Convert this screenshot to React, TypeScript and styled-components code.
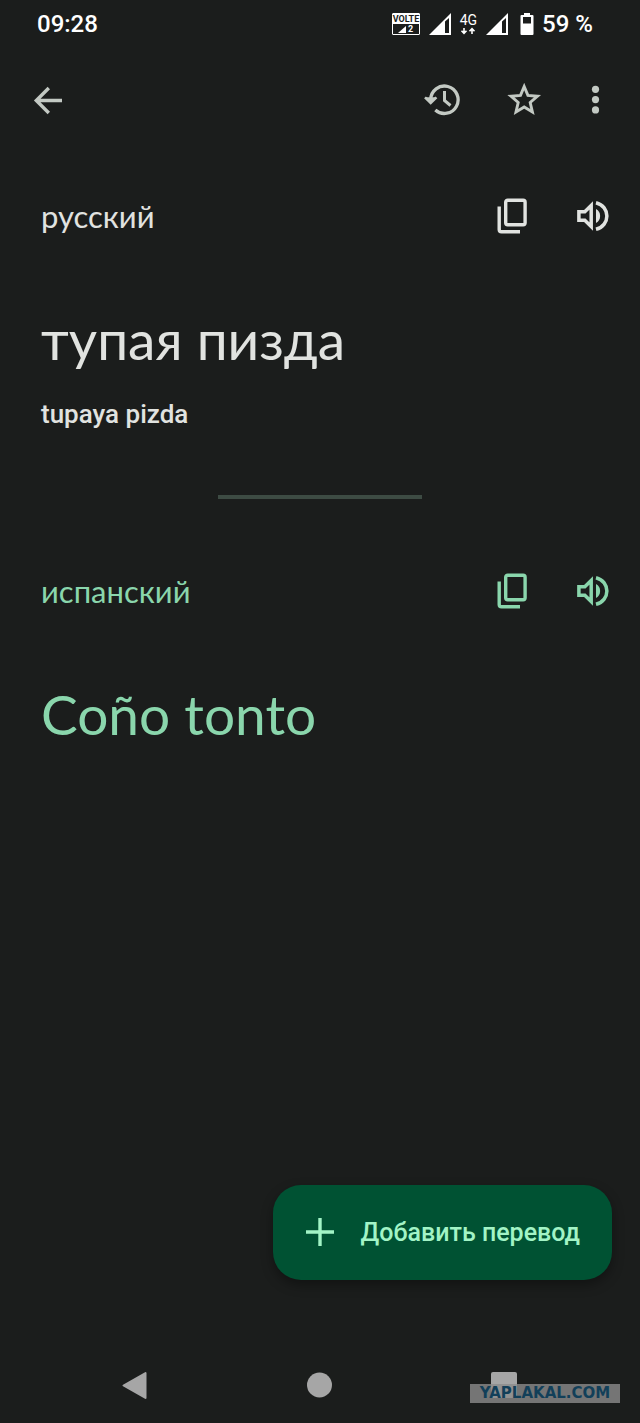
import React from "react";
import styled, { createGlobalStyle } from "styled-components";

const colors = {
  background: "#1b1d1c",
  text: "#e1e3e0",
  icon: "#c3c9c3",
  accent: "#8ad6ac",
  divider: "#3d4b43",
  fab: "#005233",
  fabText: "#a2f4c6",
  nav: "#a6a6a6",
};

const GlobalStyle = createGlobalStyle`
  *, *::before, *::after { box-sizing: border-box; }
  body { margin: 0; background: ${colors.background}; }
`;

const Screen = styled.div`
  display: flex;
  flex-direction: column;
  min-height: 100vh;
  background: ${colors.background};
  color: ${colors.text};
  font-family: Lato, "Noto Sans", sans-serif;
`;

const StatusBar = styled.div`
  display: flex;
  align-items: center;
  justify-content: space-between;
  height: 48px;
  padding: 0 47px 0 37px;
  color: #fff;
  font: 500 24px/28px Roboto, sans-serif;
`;

const StatusGroup = styled.div`
  display: flex;
  align-items: center;
  gap: 9px;
`;

const VolteBadge = styled.div`
  display: flex;
  flex-direction: column;
  width: 28px;
  height: 22px;
  border: 1px solid #fff;
  border-radius: 1px;
  font: 700 9px/10px Roboto, sans-serif;
  text-align: center;
`;

const VolteName = styled.span`
  background: #fff;
  color: ${colors.background};
`;

const VolteSlot = styled.span`
  display: flex;
  align-items: center;
  justify-content: center;
  gap: 2px;
`;

const Network = styled.div`
  display: flex;
  flex-direction: column;
  align-items: center;
  font: 400 14px/14px Roboto, sans-serif;
`;

const Battery = styled.div`
  display: flex;
  align-items: center;
  gap: 8px;
  padding-left: 3px;
`;

const Toolbar = styled.header`
  display: flex;
  align-items: center;
  justify-content: space-between;
  height: 104px;
  padding: 0 35px 0 27px;
  color: ${colors.icon};
`;

const Actions = styled.div`
  display: flex;
  gap: 40px;
`;

const IconButton = styled.button<{ $width?: number }>`
  display: flex;
  align-items: center;
  justify-content: center;
  width: ${({ $width = 42 }) => $width}px;
  height: 42px;
  padding: 0;
  border: 0;
  background: none;
  color: inherit;
  cursor: pointer;
`;

const Panel = styled.section<{ $accent?: boolean }>`
  padding: 43px 26px 0 41px;
  color: ${({ $accent }) => ($accent ? colors.accent : colors.text)};
`;

const LanguageRow = styled.div`
  display: flex;
  align-items: center;
  justify-content: space-between;
`;

const Language = styled.h2`
  margin: 0;
  font-size: 31px;
  font-weight: 400;
  line-height: 42px;
`;

const Phrase = styled.p`
  margin: 68px 0 0;
  font-size: 55px;
  font-weight: 400;
  line-height: 68px;
`;

const Transliteration = styled.p`
  margin: 25px 0 0;
  font: 500 26px/32px Roboto, sans-serif;
`;

const Divider = styled.hr`
  width: 32%;
  height: 4px;
  margin: 65px auto 28px;
  border: 0;
  background: ${colors.divider};
`;

const AddButton = styled.button`
  display: flex;
  align-items: center;
  align-self: flex-end;
  gap: 24px;
  height: 95px;
  margin: auto 28px 0 0;
  padding: 0 32px 0 28px;
  border: 0;
  border-radius: 28px;
  background: ${colors.fab};
  box-shadow: 0 5px 12px rgba(0, 0, 0, 0.35);
  color: ${colors.fabText};
  font: 500 25px/32px Roboto, sans-serif;
  cursor: pointer;
`;

const NavBar = styled.nav`
  position: relative;
  display: flex;
  justify-content: space-around;
  align-items: center;
  height: 76px;
  margin-top: 67px;
  padding: 0 42px;
  color: ${colors.nav};
`;

const Watermark = styled.span`
  position: absolute;
  right: 20px;
  bottom: 20px;
  width: 150px;
  background: rgba(140, 140, 140, 0.8);
  color: #123f59;
  font: 700 15px/19px "DejaVu Sans", sans-serif;
  text-align: center;
`;

const Signal = () => (
  <svg width="22" height="22" viewBox="0 0 22 22" aria-hidden="true">
    <path d="M22 0V22H0Z" fill="#fff" />
    <path d="M16 8.500L20 5V20H16Z" fill={colors.background} />
  </svg>
);

const CopyIcon = () => (
  <svg width="42" height="42" viewBox="0 0 42 42" fill="none" stroke="currentColor" strokeWidth="3.400" aria-hidden="true">
    <rect x="15.700" y="5.200" width="19.400" height="24.600" rx="2" />
    <path d="M9.200 11.500V34.500Q9.200 36.800 11.500 36.800H30" />
  </svg>
);

const SpeakerIcon = () => (
  <svg width="42" height="42" viewBox="0 0 42 42" fill="none" stroke="currentColor" strokeWidth="3.500" aria-hidden="true">
    <path d="M6.900 16.800H12.800L19.200 10.500V31.500L12.800 25.200H6.900Z" />
    <path d="M24 14C29.500 16.500 29.500 25.500 24 28Z" fill="currentColor" stroke="none" />
    <path d="M24 7.700C38.500 11.500 38.500 30.500 24 34.300" />
  </svg>
);

const LanguageHeader = ({ name }: { name: string }) => (
  <LanguageRow>
    <Language>{name}</Language>
    <Actions>
      <IconButton type="button" aria-label={`Копировать: ${name}`}>
        <CopyIcon />
      </IconButton>
      <IconButton type="button" aria-label={`Прослушать: ${name}`}>
        <SpeakerIcon />
      </IconButton>
    </Actions>
  </LanguageRow>
);

export default function App() {
  return (
    <>
      <GlobalStyle />
      <Screen>
        <StatusBar>
          <span>09:28</span>
          <StatusGroup>
            <VolteBadge>
              <VolteName>VOLTE</VolteName>
              <VolteSlot>
                <svg width="8" height="7" viewBox="0 0 8 7" aria-hidden="true">
                  <path d="M8 0V7H0Z" fill="#fff" />
                </svg>
                2
              </VolteSlot>
            </VolteBadge>
            <Signal />
            <Network>
              4G
              <svg width="16" height="8" viewBox="0 0 16 8" fill="none" stroke="#fff" strokeWidth="1.600" aria-hidden="true">
                <path d="M4 1V6M1.500 3.800L4 6.300L6.500 3.800M12 7V2M9.500 4.200L12 1.700L14.500 4.200" />
              </svg>
            </Network>
            <Signal />
            <Battery>
              <svg width="14" height="24" viewBox="0 0 14 24" aria-hidden="true">
                <path d="M4 1H10V3H12.500Q13.500 3 13.500 4V22Q13.500 23 12.500 23H1.500Q0.500 23 0.500 22V4Q0.500 3 1.500 3H4Z" fill="#fff" />
                <path d="M3 5H11V11.500H3Z" fill={colors.background} />
              </svg>
              <span>59 %</span>
            </Battery>
          </StatusGroup>
        </StatusBar>

        <Toolbar>
          <IconButton type="button" aria-label="Назад">
            <svg width="42" height="42" viewBox="0 0 42 42" fill="none" stroke="currentColor" strokeWidth="3.400" aria-hidden="true">
              <path d="M35 21.500H9M21.800 9L9.300 21.500L21.800 34" />
            </svg>
          </IconButton>
          <Actions>
            <IconButton type="button" aria-label="История">
              <svg width="42" height="42" viewBox="0 0 42 42" fill="none" stroke="currentColor" strokeWidth="3.300" aria-hidden="true">
                <path d="M9.700 22V20.500A13.700 13.700 0 1 1 14.300 31" />
                <path d="M4 18.300L9.700 24L15.400 18.300" fill="currentColor" strokeWidth="2.600" />
                <path d="M23.500 12V21.500L29.500 26.500" strokeWidth="3" />
              </svg>
            </IconButton>
            <IconButton type="button" aria-label="В избранное">
              <svg width="42" height="42" viewBox="0 0 42 42" fill="none" stroke="currentColor" strokeWidth="2.900" aria-hidden="true">
                <path d="M21.200 7.500L24.900 16.400L34.500 17.200L27.200 23.500L29.400 32.900L21.200 27.900L13 32.900L15.200 23.500L7.900 17.200L17.500 16.400Z" />
              </svg>
            </IconButton>
            <IconButton type="button" aria-label="Ещё" $width={20}>
              <svg width="20" height="42" viewBox="0 0 20 42" fill="currentColor" aria-hidden="true">
                <circle cx="10.500" cy="10.300" r="3.600" />
                <circle cx="10.500" cy="20.600" r="3.600" />
                <circle cx="10.500" cy="30.900" r="3.600" />
              </svg>
            </IconButton>
          </Actions>
        </Toolbar>

        <main>
          <Panel lang="ru">
            <LanguageHeader name="русский" />
            <Phrase>тупая пизда</Phrase>
            <Transliteration>tupaya pizda</Transliteration>
          </Panel>
          <Divider />
          <Panel $accent>
            <LanguageHeader name="испанский" />
            <Phrase lang="es">Coño tonto</Phrase>
          </Panel>
        </main>

        <AddButton type="button">
          <svg width="36" height="36" viewBox="0 0 36 36" fill="none" stroke="currentColor" strokeWidth="3.400" aria-hidden="true">
            <path d="M19 3V31M5 17H33" />
          </svg>
          Добавить перевод
        </AddButton>

        <NavBar>
          <IconButton type="button" aria-label="Назад в системе">
            <svg width="42" height="42" viewBox="0 0 42 42" fill="currentColor" stroke="currentColor" strokeWidth="2" strokeLinejoin="round" aria-hidden="true">
              <path d="M9.500 21.500L31.500 9V34Z" />
            </svg>
          </IconButton>
          <IconButton type="button" aria-label="Главный экран">
            <svg width="42" height="42" viewBox="0 0 42 42" fill="currentColor" aria-hidden="true">
              <circle cx="20.500" cy="21" r="12.500" />
            </svg>
          </IconButton>
          <IconButton type="button" aria-label="Недавние приложения">
            <svg width="42" height="42" viewBox="0 0 42 42" fill="currentColor" aria-hidden="true">
              <rect x="7" y="8" width="26" height="26" rx="2" />
            </svg>
          </IconButton>
          <Watermark>YAPLAKAL.COM</Watermark>
        </NavBar>
      </Screen>
    </>
  );
}
